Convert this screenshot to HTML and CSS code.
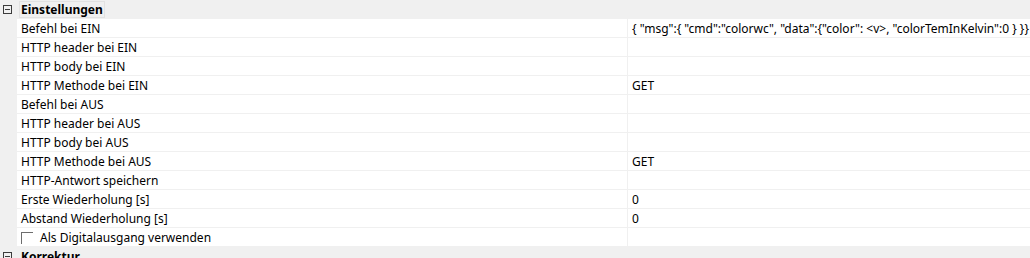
FILE: index.html
```html
<!DOCTYPE html>
<html>
<head>
<meta charset="utf-8">
<link rel="stylesheet" href="styles.css">
</head>
<body>
<div class="grid">
  <div class="cat">
    <div class="gutter"><span class="toggle"></span></div>
    <div class="cat-label"><span class="focus">Einstellungen</span></div>
  </div>
  <div class="row"><div class="gutter"></div><div class="name">Befehl bei EIN</div><div class="val">{ "msg":{ "cmd":"colorwc", "data":{"color": &lt;v&gt;, "colorTemInKelvin":0 } }}</div></div>
  <div class="row"><div class="gutter"></div><div class="name">HTTP header bei EIN</div><div class="val"></div></div>
  <div class="row"><div class="gutter"></div><div class="name">HTTP body bei EIN</div><div class="val"></div></div>
  <div class="row"><div class="gutter"></div><div class="name">HTTP Methode bei EIN</div><div class="val">GET</div></div>
  <div class="row"><div class="gutter"></div><div class="name">Befehl bei AUS</div><div class="val"></div></div>
  <div class="row"><div class="gutter"></div><div class="name">HTTP header bei AUS</div><div class="val"></div></div>
  <div class="row"><div class="gutter"></div><div class="name">HTTP body bei AUS</div><div class="val"></div></div>
  <div class="row"><div class="gutter"></div><div class="name">HTTP Methode bei AUS</div><div class="val">GET</div></div>
  <div class="row"><div class="gutter"></div><div class="name">HTTP-Antwort speichern</div><div class="val"></div></div>
  <div class="row"><div class="gutter"></div><div class="name">Erste Wiederholung [s]</div><div class="val">0</div></div>
  <div class="row"><div class="gutter"></div><div class="name">Abstand Wiederholung [s]</div><div class="val">0</div></div>
  <div class="row"><div class="gutter"></div><div class="name check"><span class="box"></span>Als Digitalausgang verwenden</div><div class="val"></div></div>
  <div class="cat">
    <div class="gutter"><span class="toggle"></span></div>
    <div class="cat-label"><span class="plain">Korrektur</span></div>
  </div>
</div>
</body>
</html>
```
FILE: styles.css
```css
html, body {
  margin: 0;
  padding: 0;
  background: #f0f0f0;
}
body {
  font-family: "Noto Sans", "Segoe UI", sans-serif;
  font-size: 12px;
  color: #000;
  width: 1030px;
  height: 258px;
  overflow: hidden;
}
.grid {
  display: flex;
  flex-direction: column;
}
.cat {
  display: flex;
  height: 19px;
  background: #f0f0f0;
}
.gutter {
  width: 17px;
  flex: none;
  background: #f0f0f0;
  position: relative;
}
.toggle {
  position: absolute;
  left: 3px;
  top: 5px;
  width: 7px;
  height: 7px;
  border: 1px solid #3c3c3c;
}
.toggle::after {
  content: "";
  position: absolute;
  left: 1px;
  top: 3px;
  width: 5px;
  height: 1px;
  background: #3c3c3c;
}
.cat-label {
  display: flex;
  align-items: center;
  padding-left: 2px;
  font-weight: bold;
}
.focus {
  border: 1px solid #e2e2e2;
  padding: 0 1px 0 1px;
  line-height: 15px;
}
.plain {
  padding-left: 2px;
  line-height: 17px;
}
.row {
  display: flex;
  height: 18px;
  border-bottom: 1px solid #f0f0f0;
  background: #fff;
}
.name {
  width: 606px;
  flex: none;
  padding-left: 4px;
  line-height: 19px;
  height: 18px;
  border-right: 1px solid #f0f0f0;
  white-space: nowrap;
}
.val {
  flex: 1;
  padding-left: 4px;
  line-height: 19px;
  height: 18px;
  white-space: nowrap;
}
.check {
  display: flex;
  align-items: center;
}
.box {
  width: 12px;
  height: 12px;
  border-top: 1px solid #6d6d6d;
  border-left: 1px solid #6d6d6d;
  box-sizing: border-box;
  margin: 2px 7px 0 0;
}
```
